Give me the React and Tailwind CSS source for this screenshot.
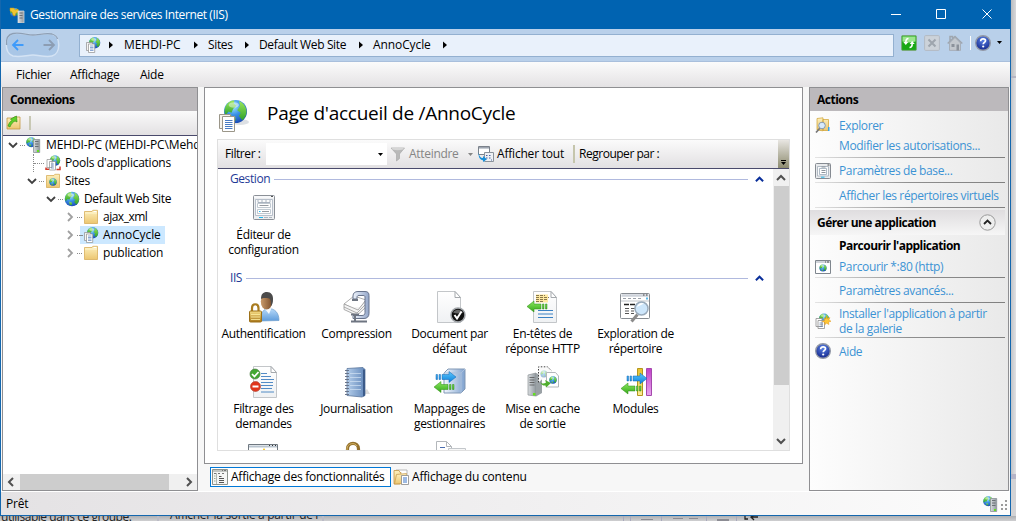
import React from "react";

/* ---------- shared gradients ---------- */
const Grad = ({ id, a, b, h }) => (
  <linearGradient id={id} x1="0" y1="0" x2={h ? 1 : 0} y2={h ? 0 : 1}>
    <stop offset="0" stopColor={a} />
    <stop offset="1" stopColor={b} />
  </linearGradient>
);
const Defs = () => (
  <svg className="absolute h-0 w-0" aria-hidden="true">
    <defs>
      <radialGradient id="sea" cx=".4" cy=".28" r=".8">
        <stop offset="0" stopColor="#a5eaff" />
        <stop offset=".45" stopColor="#3c93e6" />
        <stop offset="1" stopColor="#1440ae" />
      </radialGradient>
      <radialGradient id="helpg" cx=".5" cy=".3" r=".7">
        <stop offset="0" stopColor="#5b83e6" />
        <stop offset="1" stopColor="#14278c" />
      </radialGradient>
      <Grad id="land" a="#9be85c" b="#2fa12a" />
      <Grad id="folder" a="#fdf0bd" b="#ecc670" />
      <Grad id="blueA" a="#5cc8fb" b="#0b7fdc" />
      <Grad id="greenA" a="#8be860" b="#35a81a" />
      <Grad id="gold" a="#f7de86" b="#a8761a" />
      <Grad id="srv" a="#d9dde0" b="#8f979d" h />
      <Grad id="steel" a="#eef3fb" b="#93a6c9" h />
      <Grad id="book" a="#b3cdea" b="#6489bb" h />
      <Grad id="shirt" a="#b9dbfa" b="#5e9cdc" />
      <Grad id="skin" a="#c99b6c" b="#7c4f2c" h />
      <Grad id="purple" a="#c040c8" b="#e9a5ef" />
      <Grad id="yellow" a="#e5c12a" b="#fbec98" />
      <Grad id="cube" a="#f2f7fd" b="#7fa2cf" h />
      <Grad id="page" a="#ffffff" b="#eff1f3" />
    </defs>
  </svg>
);

/* ---------- icon parts ---------- */
const Globe = ({ x = 8, y = 8, r = 7 }) => (
  <g transform={`translate(${x} ${y}) scale(${r / 10})`}>
    <circle r="10" fill="url(#sea)" />
    <path d="M-8.8-4C-7-8-4-9.5-1-9.5L-1.5-7 1-5-2-2.5-3.5 1-6 0-8.5 3C-10 1-9.6-2-8.8-4Z" fill="url(#land)" />
    <path d="M3-9.2C7-7.5 9.5-4 9.6 0 9.6 3 8 6 6 7.6L3 4 4.5 1 1.5-1 4-5Z" fill="url(#land)" />
    <path d="M-4 3.5 0 5 0 8-3 8.5Z" fill="url(#land)" />
    <ellipse cx="-1.5" cy="-5.6" rx="4.5" ry="2.4" fill="#fff" opacity=".45" />
  </g>
);
const Fold = () => (
  <>
    <path d="M5.5.5H23L28.500 6.5V31.500H5.5Z" fill="url(#page)" stroke="#c3c6c9" />
    <path d="M23 .5V6.500H28.500Z" fill="#fff" stroke="#a5a9ad" />
  </>
);
const BlueArrow = ({ x, y }) => (
  <path transform={`translate(${x} ${y})`} d="M0 3.500h1.500v5H0ZM3 3.500h1.500v5H3ZM6 3.500h7V.5L20 6l-7 5.500V8.500H6Z" fill="url(#blueA)" stroke="#0f65b4" strokeWidth=".5" />
);
const GreenArrow = ({ x, y }) => (
  <path transform={`translate(${x} ${y})`} d="M20 3.500h-1.500v5H20ZM17 3.500h-1.500v5H17ZM14 3.500H7V.5L0 6l7 5.500V8.500h7Z" fill="url(#greenA)" stroke="#2e8d15" strokeWidth=".5" />
);

const Svg = ({ s = 16, v = 16, children, className = "" }) => (
  <svg width={s} height={s} viewBox={`0 0 ${v} ${v}`} className={`shrink-0 ${className}`}>{children}</svg>
);

/* ---------- 16px icons ---------- */
const GlobePages = ({ s = 16 }) => (
  <Svg s={s}>
    <Globe x={9.6} y={5.800} r={5.700} />
    <path d="M1.500 5.500h6v8h-6Z" fill="#f3f3f3" stroke="#8e8e8e" strokeWidth=".7" />
    <path d="M3.500 7h6.200v8.500H3.500Z" fill="#fff" stroke="#8e8e8e" strokeWidth=".7" />
    <path d="M5 9h3.500M5 10.500h3.500M5 12h3.500M5 13.500h3.500" stroke="#5a82c0" strokeWidth=".7" />
  </Svg>
);
const BigGlobePages = () => (
  <Svg s={32} v={32}>
    <ellipse cx="21" cy="22" rx="9" ry="3" fill="#c7ccd2" opacity=".6" />
    <Globe x={16.500} y={11.500} r={11.500} />
    <path d="M.5 14.500h11v14H.5Z" fill="#f6f3ec" stroke="#9b9689" />
    <path d="M3.500 16.500h12v15h-12Z" fill="#fff" stroke="#9b9689" />
    <path d="M6 20.500h7.500M6 22.500h7.500M6 24.500h7.500M6 26.500h7.500M6 28.500h7.500" stroke="#4a7cc2" />
  </Svg>
);
const Pools = () => (
  <Svg>
    <Globe x={10} y={5.500} r={5.200} />
    <path d="M2 4.500h5v8H2ZM4.500 6.500h6v8.500h-6Z" fill="#fff" stroke="#8e8e8e" strokeWidth=".7" />
    <path d="M6 9h3M6 11h3M6 13h3" stroke="#5a82c0" strokeWidth=".7" />
    <path d="M1 12.500v1.800h3M15 11.500v3h-3.500" fill="none" stroke="#d03a2c" strokeWidth="1.500" />
  </Svg>
);
const ServerGlobe = ({ s = 16 }) => (
  <Svg s={s}>
    <Globe x={5.200} y={5.200} r={5} />
    <path d="M7.500 2.500h6.200v13H7.500Z" fill="url(#srv)" stroke="#8b9398" strokeWidth=".8" />
    <path d="M9 4.500h3.500M9 7h3.500M9 9.500h3.500" stroke="#555d62" strokeWidth=".8" />
    <path d="M11 13h2v2h-2Z" fill="#61e21c" />
  </Svg>
);
const AppIcon = () => (
  <Svg>
    <Globe x={5.500} y={5.500} r={4.500} />
    <path d="M1 1h4l1 2 3-1 1 3-3 1-1 3-2-1-1-3-2-1Z" fill="#efc62f" stroke="#b98b12" strokeWidth=".5" />
    <path d="M9 4h6v12H9Z" fill="url(#srv)" stroke="#dbe1e5" strokeWidth=".7" />
    <path d="M10.500 6h3M10.500 8.500h3M10.500 11h3" stroke="#555d62" strokeWidth=".8" />
  </Svg>
);
const FolderShape = () => (
  <path d="M1.500 2.500h7.500l.8-1.200h4.700V14.500H1.500Z" fill="url(#folder)" stroke="#d8ae5c" strokeWidth=".8" />
);
const Folder = () => (
  <Svg><FolderShape /><path d="M2 4h12" stroke="#fff6d0" /><path d="M10.500 2.500h3" stroke="#fff" /></Svg>
);
const FolderGlobe = () => (<Svg><FolderShape /><Globe x={8} y={9} r={3.700} /></Svg>);
const FolderUp = () => (
  <Svg>
    <path d="M1 3h6l1-1h6v12H1Z" fill="url(#folder)" stroke="#c69a45" strokeWidth=".8" />
    <path d="M2 11C3 8 4 6.500 6 5.500L4.500 4 10.500 1 11 7 9 6C7 7 5 9 4 12Z" fill="#5fd028" stroke="#2c8b13" strokeWidth=".6" />
  </Svg>
);
const GlobeOnly = () => (<Svg><Globe x={8} y={8} r={7.300} /></Svg>);
const FolderSearch = () => (
  <Svg>
    <path d="M2 1.500 8 .8v13L2 13ZM8 2.500h5.500v11H8Z" fill="url(#folder)" stroke="#cfa12f" strokeWidth=".7" />
    <path d="M1 15.500 5 11" stroke="#777" strokeWidth="1.700" />
    <circle cx="7" cy="8.500" r="3.300" fill="#d7eafc" stroke="#8499b0" />
    <path d="M13 10v4h1.500v-4Z" fill="#36a0e8" />
  </Svg>
);
const ConfigShape = () => (
  <>
    <rect x=".5" y=".5" width="21" height="24" rx="1" fill="#eceef0" stroke="#8b9097" />
    <path d="M1 2h20" stroke="#f7f8fa" strokeWidth="2" />
    <path d="M18 1.500h2" stroke="#555" />
    <path d="M2.500 4.500h17v16h-17Z" fill="#fafbfc" stroke="#b0b9c5" strokeWidth=".9" />
    <path d="M5 5v2.500h12V5M9 5v2.500M13 5v2.500" fill="none" stroke="#a2acb9" strokeWidth=".9" />
    <path d="M4.500 8.500h13v4h-13ZM4.500 14.500h13v4h-13Z" fill="#fff" stroke="#b9c3cc" strokeWidth=".9" />
    <path d="M6.500 10.500h9M9 16.500h7" stroke="#8a9096" strokeWidth=".9" />
    <path d="M6 16.500h1.500M6 22.500h4" stroke="#22b8ee" />
    <path d="M11 22.500h4M16 22.500h3" stroke="#aeb6bf" />
  </>
);
const ConfigSmall = () => (
  <Svg>
    <rect x=".5" y=".5" width="15" height="15" rx="1" fill="#e8eaec" stroke="#868b92" />
    <path d="M12.500 2h2" stroke="#444" />
    <path d="M2.500 3.500h11v9.500h-11Z" fill="#fafbfc" stroke="#a2acb9" strokeWidth=".8" />
    <path d="M4.500 5.500h7v6h-7Z" fill="#fff" stroke="#9ba9b7" strokeWidth=".8" />
    <path d="M6.500 7.500h4M6.500 9.500h4M6.500 4h4" stroke="#808891" strokeWidth=".9" />
    <path d="M6 14.200h3.500" stroke="#22b8ee" />
  </Svg>
);
const BrowserGlobe = () => (
  <Svg>
    <path d="M.5 1.500h15v13H.5Z" fill="#fff" stroke="#7f868e" />
    <path d="M1 3h14" stroke="#cbd0d6" strokeWidth="1.800" /><path d="M10 3h1M12 3h2" stroke="#555" />
    <Globe x={8} y={9} r={3.600} />
  </Svg>
);
const Gallery = () => (
  <Svg>
    <Globe x={9} y={5.500} r={5} />
    <path d="M1 5.500h6v8H1ZM3 7.500h6.500v8H3Z" fill="#fff" stroke="#8e8e8e" strokeWidth=".8" />
    <path d="M4.500 10h3.500M4.500 11.800h3.500M4.500 13.500h3.500" stroke="#6d86aa" strokeWidth=".8" />
    <path d="m11.500 3 .9 2.500 2.500-.9-1.100 2.400 2.200 1.200-2.500.8.400 2.500-2.300-1.300-1.900 1.600.1-2.600L7.300 8.500l2.300-1L9 5l2 .9Z" fill="#ffc735" stroke="#e39416" strokeWidth=".5" />
  </Svg>
);
const Help = () => (
  <Svg>
    <circle cx="8" cy="8" r="7.300" fill="url(#helpg)" stroke="#9298a6" strokeWidth="1.400" />
    <path d="M5.700 6.200C5.700 4.600 6.700 3.800 8.100 3.800c1.500 0 2.400.8 2.400 2 0 1.500-2.300 1.700-2.300 3.400" fill="none" stroke="#fff" strokeWidth="1.700" />
    <circle cx="8.200" cy="11.500" r="1.100" fill="#fff" />
  </Svg>
);
const Refresh = () => (
  <Svg>
    <rect x=".6" y=".6" width="14.800" height="14.800" rx="1" fill="#19a815" stroke="#7ba878" />
    <path d="M1.500 1.500h13v5q-6.500 2-13 0Z" fill="#9be58e" />
    <path d="M7.500 3.500C5.500 3.500 4.800 5 4.800 7.500M8.500 12.500c2 0 2.700-1.500 2.700-4" fill="none" stroke="#fff" strokeWidth="1.600" />
    <path d="M2.300 7h5L4.800 10ZM8.700 9h5L11.200 6Z" fill="#fff" />
  </Svg>
);
const Stop = () => (
  <Svg>
    <rect x=".6" y=".6" width="14.800" height="14.800" rx="1" fill="#ccd2d9" stroke="#b3bac3" />
    <path d="m4.500 4.500 7 7m0-7-7 7" stroke="#9ea5ae" strokeWidth="2.100" />
  </Svg>
);
const Home = () => (
  <Svg>
    <path d="M2.500 8v7.400h11V8L8 2.500Z" fill="#c3c8ce" stroke="#a1a7b0" strokeWidth=".8" />
    <path d="M.7 8.500 8 1.500l7.300 7M3 6V1.500h2.500V4" fill="none" stroke="#9fa6af" strokeWidth="1.500" />
    <path d="M4.500 9h3v3h-3ZM9.500 9.500h2.500v6H9.500Z" fill="#8c929b" />
  </Svg>
);
const Funnel = () => (
  <Svg>
    <path d="M1 2h13.500L9.500 8v4.500L6.500 15V8Z" fill="#b9b9b9" stroke="#a2a2a2" strokeWidth=".6" />
    <ellipse cx="7.700" cy="2.800" rx="6.200" ry="1.400" fill="#d6d6d6" />
  </Svg>
);
const ShowAll = () => (
  <Svg>
    <path d="M.5.500h11v8H.5Z" fill="#fff" stroke="#7b828b" /><path d="M1 1.800h10" stroke="#9aa2ad" strokeWidth="1.500" />
    <path d="M6.500 6.500h9v9h-9Z" fill="#eef0f4" stroke="#8b929b" />
    <path d="M8 9.500h1.500M11 9.500h1.500M8 12h1.500M11 12h1.500M13 14h1" stroke="#47629f" strokeWidth="1.200" />
    <path d="M.8 6.500C.8 10 2.500 12 5 12v-2l4 3.300-4 2.700v-1.800C2 14 0 11 .8 6.500Z" fill="#1a8fd8" />
  </Svg>
);
const FeatureView = () => (
  <Svg>
    <path d="M.5.5h15v15H.5Z" fill="#f5f6f5" stroke="#8d938d" />
    <path d="M1 2h14" stroke="#c3c6c3" strokeWidth="2" /><path d="M10 1.500h1M12 1.500h2M2 4.500h2M6 4.500h2M10 4.500h2" stroke="#777" />
    <path d="M2 7h1.500M2 9.500h1.500M2 12h1.500" stroke="#9daf98" /><path d="M4.500 4v11" stroke="#b3b8b3" />
    <path d="M7 7.500h2.500M7 9.500h5M7 11.500h5M7 13.500h5" stroke="#555" />
  </Svg>
);
const ContentView = () => (
  <Svg>
    <path d="M3 1h11v9H3Z" fill="#fff" stroke="#a8a8a8" strokeWidth=".8" />
    <path d="M1 1.500h5l1 2h1l-1 11.500H1Z" fill="url(#folder)" stroke="#c49747" strokeWidth=".8" />
    <path d="M3.500 5.500 13.500 4.500 12 14.500 1.500 15Z" fill="url(#folder)" stroke="#c49747" strokeWidth=".7" />
    <path d="M8.500 6.500h7v9h-7Z" fill="#fff" stroke="#888" strokeWidth=".8" />
    <path d="M10 9h4M10 11h4M10 13h4" stroke="#3a74c6" />
  </Svg>
);

/* ---------- 32px feature icons ---------- */
const L = ({ children }) => <Svg s={32} v={32}>{children}</Svg>;
const Icons = {
  config: <L><g transform="translate(5 3)"><ConfigShape /></g></L>,
  auth: (
    <L>
      <path d="M12.500 30c0-8 3-12.500 8-12.500 6 0 10.500 4 10.500 12Z" fill="url(#shirt)" stroke="#6b9ccc" strokeWidth=".7" />
      <path d="m17 18 4 5 2.500-6Z" fill="#f7fafd" />
      <ellipse cx="18.500" cy="10.500" rx="5.700" ry="8" fill="url(#skin)" />
      <path d="M13 8C13 3 15 1 19 1s6.500 3 6 8c0 3-1 5-2 6 0-5 0-8-4-8-2 0-4-.5-6 1Z" fill="#4c4b4b" />
      <path d="M4 21v-4c0-5 6.500-5 6.500 0v4" fill="none" stroke="#a97c20" strokeWidth="2.200" />
      <rect x="1.500" y="20" width="12" height="11" rx="1" fill="url(#gold)" stroke="#9d7119" />
      <path d="M3 23.500h9M3 26h9M3 28.500h9" stroke="#fff0a4" strokeWidth=".8" />
    </L>
  ),
  compression: (
    <L>
      <path d="m3 13 10-8 12 4-8 11Z" fill="#fff" stroke="#999" strokeWidth=".8" />
      <path d="m3 13v3l13 6 9-9V9l-8 10ZM3 16v2.500l13 6L25 16" fill="#f4f4f4" stroke="#999" strokeWidth=".8" />
      <path d="M12 8V5c0-3 2-4.500 5-4.500h7c3 0 4 1.500 4 4v18c0 3-2 5-5 5H12v-3h9c2 0 3-1 3-3V6c0-1-.5-1.500-2-1.500h-4c-2 0-2 1-2 3.500Z" fill="url(#steel)" stroke="#67738b" strokeWidth="1" />
      <path d="M11 9h6M14 24v6M10 30.500h16M10 23.500h8" stroke="#6e7581" strokeWidth="2" />
    </L>
  ),
  document: (
    <L><g transform="translate(-2 0)"><Fold /></g>
      <circle cx="24" cy="24" r="7" fill="#111" stroke="#a0a4a8" strokeWidth="1.500" />
      <path d="M19 21.500a6 6 0 0 1 10 0q-5 2-10 0Z" fill="#666" />
      <path d="m20.500 24 2.500 3.500 4.500-7" fill="none" stroke="#fff" strokeWidth="2" />
    </L>
  ),
  headers: (
    <L><g transform="translate(1 0)"><Fold /></g>
      <path d="M9 3.500h12v8H9Z" fill="#ffe9a0" />
      <path d="M9 4.500h9M9 6.500h13M9 8.500h12M9 10.500h8" stroke="#6b5a34" strokeWidth=".8" strokeDasharray="3 1" />
      <path d="M11 19.500h15M11 23h15M11 26.500h15" stroke="#3b82c4" strokeWidth="1.200" />
      <GreenArrow x={0} y={9.500} />
    </L>
  ),
  browse: (
    <L>
      <rect x=".5" y="2.500" width="29" height="25" rx="1" fill="#fff" stroke="#878c92" />
      <path d="M1.500 4.500h27" stroke="#cdd2da" strokeWidth="2.500" /><path d="M23 4h1.500M26 4h1.500" stroke="#444" />
      <path d="M3 7.500h20" stroke="#9ba1aa" strokeDasharray="3 2" /><path d="M1 10h28" stroke="#c0c5cb" />
      <path d="M4 13.500h11" stroke="#222" strokeWidth="1.400" strokeDasharray="5 1" />
      <path d="M5 17.500h4M11 17.500h4M5 20h4M11 20h3M5 22.500h4M11 22.500h3" stroke="#555" />
      <path d="m11.500 30.500 6-7" stroke="#8b8b8b" strokeWidth="3" />
      <circle cx="21.500" cy="17.500" r="6.500" fill="#cde6fb" stroke="#9ab" strokeWidth="1.500" />
      <path d="M17 16a5 5 0 0 1 7-3.500Z" fill="#fff" />
      <path d="M26 6.500h2v2h-2Z" fill="#58b7e8" />
    </L>
  ),
  filter: (
    <L><Fold />
      <path d="M13 7.500h6M13 10.500h10M13 13.500h13M13 16.500h12M13 19.500h12M13 22.500h11M13 26h13" stroke="#3f7fc0" strokeWidth=".9" />
      <circle cx="7" cy="8" r="5" fill="#43a832" stroke="#4c7b45" strokeWidth=".7" /><path d="m4 8 2.500 2.500L10.500 6" fill="none" stroke="#fff" strokeWidth="1.700" />
      <circle cx="7.500" cy="20.500" r="5" fill="#e1351b" stroke="#b44836" strokeWidth=".7" /><path d="M4.500 20.500h6" stroke="#fff" strokeWidth="2" />
    </L>
  ),
  journal: (
    <L>
      <path d="m20 28 9 0-3-5Z" fill="#ddd" />
      <path d="M6 2.500 22 1.500l2 2v26l-3 1.500L6 29.500Z" fill="url(#book)" stroke="#5b769c" strokeWidth=".8" />
      <path d="m22 3.500 2 0v26l-2 1Z" fill="#3c5b8a" />
      <path d="M9 7.500h11M9 11.500h11M9 15.500h11M9 19.500h11M9 23.500h11" stroke="#d3e2f3" strokeWidth=".7" />
      <path d="M4 4.500h4M4 7.500h4M4 10.500h4M4 13.500h4M4 16.500h4M4 19.500h4M4 22.500h4M4 25.500h4M4 28.500h4" stroke="#69748a" />
    </L>
  ),
  handlers: (
    <L>
      <path d="m10 7 4-4h17v20l-4 4H10Z" fill="url(#cube)" stroke="#8198b5" />
      <path d="M10 7h17v20M27 7l4-4" fill="none" stroke="#a9bfdb" />
      <BlueArrow x={2} y={5} /><GreenArrow x={0} y={15} />
    </L>
  ),
  cache: (
    <L>
      <path d="m1 9 8-2v23l-8-1Z" fill="url(#srv)" stroke="#8c9295" strokeWidth=".7" />
      <path d="m9 7 6 3v17l-6 3.500Z" fill="#9aa1a5" />
      <path d="M2.500 11.500h5M2.500 14h5M2.500 16.500h5M2.500 19h5" stroke="#555" strokeWidth=".8" /><path d="M6 27h2.500v2.500H6Z" fill="#62e01e" />
      <path d="M11.500 16.500V.8h9l4 4" fill="#fafafa" stroke="#444" strokeDasharray="1.500 1.500" />
      <g opacity=".45"><Globe x={17} y={8} r={3.500} /></g>
      <path d="M19.500 6.500h9l3 3.500v11h-12Z" fill="#fff" stroke="#b3b7bb" /><Globe x={26} y={14} r={3.700} />
      <path d="M13 16c2 2 4 2 6 .5L18 14l6 3-5 4.500-.5-2c-2 .5-4-.5-5.500-3.500Z" fill="#4fae2e" />
    </L>
  ),
  modules: (
    <L>
      <path d="M17.500 2.500h5v27h-5Z" fill="url(#yellow)" stroke="#b4961c" />
      <path d="M26.500 2.500h5v27h-5Z" fill="url(#purple)" stroke="#a449ac" />
      <BlueArrow x={7} y={6.500} /><GreenArrow x={1} y={16.500} />
    </L>
  ),
  errors: (
    <L><path d="M.5 3.500h29V29H.5Z" fill="#fff" stroke="#6f7880" /><path d="M1 5.500h28" stroke="#b9c4cf" strokeWidth="2" /><path d="M21 4.500h1M24 4.500h1M27 4.500h1" stroke="#333" /><path d="m16 7 6 10H10Z" fill="#f2c321" /></L>
  ),
  ssl: (
    <L><path d="M6.500 14V8c0-7.500 11-7.500 11 0v6" fill="none" stroke="#93702c" strokeWidth="3.200" /><path d="M6 14V8c0-6 8-7 10-3" fill="none" stroke="#d5b565" strokeWidth="1" /></L>
  ),
  mime: (
    <L><path d="M2.500.5h10l5 5V28h-15Z" fill="#fff" stroke="#b3b7bb" /><path d="M12.500.5v5h5" fill="none" stroke="#b3b7bb" /><path d="M6 6.500h5" stroke="#4a6db0" /><path d="M14.500 7.500h17V30h-17Z" fill="#f7f7f7" stroke="#c3c7cb" /></L>
  ),
};

/* ---------- chevrons and arrows ---------- */
const Chevron = ({ dir = "down", color = "#404040", w = 1.800, s = 10 }) => {
  const d = { down: "m1 3 4 4 4-4", up: "m1 7 4-4 4 4", left: "m7 1-4 4 4 4", right: "m3 1 4 4-4 4" }[dir];
  return <svg width={s} height={s} viewBox="0 0 10 10" className="shrink-0"><path d={d} fill="none" stroke={color} strokeWidth={w} /></svg>;
};
const Triangle = ({ color = "#000" }) => (
  <svg width="5" height="3" viewBox="0 0 5 3" className="shrink-0"><path d="M0 0h5L2.500 3Z" fill={color} /></svg>
);
const CrumbArrow = () => (
  <svg width="5" height="8" viewBox="0 0 5 8" className="shrink-0"><path d="m0 .5 4 3.500-4 3.500Z" fill="#000" /></svg>
);

/* ---------- title bar ---------- */
const TitleBar = () => (
  <div className="flex h-[29px] shrink-0 items-center bg-[#0063b1] pl-[8px] text-white">
    <AppIcon />
    <span className="ml-[5px] flex-1 tracking-[-0.41px]">Gestionnaire des services Internet (IIS)</span>
    <svg width="104" height="12" viewBox="0 0 104 12" className="mb-[2px] mr-[15px]" fill="none" stroke="#fff">
      <path d="M0 6.500h10M45.500 1.500h9v9h-9ZM91.500 1.500l9 9m0-9-9 9" />
    </svg>
  </div>
);

const Crumb = ({ children, className }) => <span className={className}>{children}</span>;

const AddressBar = () => (
  <div className="flex h-[33px] shrink-0 items-center border-b border-[#a9bfdc] bg-[#b9d0ea] pl-[4px]">
    <svg width="56" height="28" viewBox="0 0 56 28" className="shrink-0">
      <path d="M8 2.500C16 1 22 4 28 4s12-2.500 19-1c9 2 9 20 0 22-7 1.500-13-1-19-1s-12 2.500-20 1C-1 22-1 5 8 2.500Z" fill="#a9c6e6" stroke="#d4e3f4" strokeWidth="1.500" />
      <path d="M1.500 14C1 7 3 3.500 8 2.500c7-1.500 14 1.500 20 1.500s12-2.500 19-1c3 1 5 3 5.500 5" fill="none" stroke="#8d9fb5" strokeWidth="1.300" />
      <path d="M18.500 14H8m5-5-5 5 5 5" fill="none" stroke="#3f9bfa" strokeWidth="1.800" />
      <path d="M38.500 14H49m-5-5 5 5-5 5" fill="none" stroke="#8c9db3" strokeWidth="1.800" />
    </svg>
    <div className="ml-[18px] flex h-[23px] w-[815px] items-center border border-[#93b0d0] bg-[#e9f1fb] pl-[5px]">
      <GlobePages />
      <span className="ml-[8px]"><CrumbArrow /></span>
      <Crumb className="ml-[10px] w-[70px] whitespace-nowrap tracking-[-0.05px]">MEHDI-PC</Crumb>
      <CrumbArrow />
      <Crumb className="ml-[9px] w-[37px] tracking-[-0.35px]">Sites</Crumb>
      <CrumbArrow />
      <Crumb className="ml-[9px] w-[100px] whitespace-nowrap tracking-[-0.36px]">Default Web Site</Crumb>
      <CrumbArrow />
      <Crumb className="ml-[9px] w-[70px] tracking-[-0.1px]">AnnoCycle</Crumb>
      <CrumbArrow />
    </div>
    <div className="mb-[5px] ml-[7px] flex items-center">
      <Refresh /><span className="ml-[7px] h-4"><Stop /></span><span className="ml-[7px] h-4"><Home /></span>
      <span className="ml-[7px] h-[14px] w-px bg-white" /><span className="ml-[4px] h-4"><Help /></span>
      <span className="ml-[6px] flex"><Triangle /></span>
    </div>
  </div>
);

const MenuBar = () => (
  <div className="flex h-[25px] shrink-0 items-center border-b border-[#e4e3e4] bg-gradient-to-b from-[#fbfbfb] to-[#e5e3e5] pl-[15px] pt-px tracking-[-0.25px]">
    <span className="w-[54px]">Fichier</span>
    <span className="w-[70px]">Affichage</span>
    <span>Aide</span>
  </div>
);

/* ---------- connections tree ---------- */
const Dots = ({ className }) => <span className={`shrink-0 border-t border-dotted border-[#8a8a8a] ${className}`} />;

const TreeLabel = ({ icon, label, selected, track }) => (
  <span className={`flex h-full items-center ${selected ? "bg-[#cce8ff]" : ""}`}>
    {selected && <Dots className="w-[2px]" />}
    <span className="ml-[1px]">{icon}</span>
    <span className={`ml-[4px] pr-[4px] ${track}`}>{label}</span>
  </span>
);
const TreeRow = ({ pad, open, selected, track = "tracking-[-0.3px]", ...rest }) => (
  <div className={`flex h-[18px] items-center whitespace-nowrap ${pad}`}>
    <span className="flex w-[10px] shrink-0 justify-center">
      {open ? <Chevron color="#404040" /> : <Chevron dir="right" color="#a0a0a0" />}
    </span>
    <Dots className={selected ? "ml-[2px] w-[3px]" : "ml-[2px] w-[5px]"} />
    <TreeLabel selected={selected} track={track} {...rest} />
  </div>
);

const Connections = () => (
  <section className="flex h-[404px] w-[196px] shrink-0 flex-col overflow-hidden border border-[#8f8f92] bg-white">
    <h2 className="flex h-[23px] shrink-0 items-center bg-[#bcb9bc] pl-[7px] font-bold tracking-[-0.55px]">Connexions</h2>
    <div className="flex h-[25px] shrink-0 items-center border-b border-[#4a4a6c] bg-gradient-to-b from-[#fafafa] to-[#e3e1e3] pl-[3px]">
      <FolderUp /><span className="ml-[7px] h-[14px] w-[2px] bg-[#c8c8b4]" />
    </div>
    <div className="flex-1 overflow-hidden">
      <TreeRow pad="pl-[5px]" open icon={<ServerGlobe />} label="MEHDI-PC (MEHDI-PC\Mehdi)" track="tracking-[-0.12px]" />
      <div className="flex h-[18px] items-center whitespace-nowrap pl-[30px]">
        <span className="h-full shrink-0 border-l border-dotted border-[#8a8a8a]" />
        <Dots className="w-[10px]" />
        <TreeLabel icon={<Pools />} label="Pools d'applications" track="tracking-[-0.25px]" />
      </div>
      <TreeRow pad="pl-[24px]" open icon={<FolderGlobe />} label="Sites" />
      <TreeRow pad="pl-[43px]" open icon={<GlobeOnly />} label="Default Web Site" track="tracking-[-0.36px]" />
      <TreeRow pad="pl-[62px]" icon={<Folder />} label="ajax_xml" track="tracking-[-0.5px]" />
      <TreeRow pad="pl-[62px]" icon={<GlobePages />} label="AnnoCycle" selected track="tracking-[-0.1px]" />
      <TreeRow pad="pl-[62px]" icon={<Folder />} label="publication" track="tracking-[-0.2px]" />
    </div>
    <div className="flex h-[16px] shrink-0 items-center justify-between bg-[#f0f0f0] pl-[3px] pr-[3px]">
      <Chevron dir="left" color="#505050" w={2} />
      <span className="ml-[4px] h-full w-[149px] bg-[#cdcdcd]" />
      <span className="flex-1" />
      <Chevron dir="right" color="#505050" w={2} />
    </div>
  </section>
);

/* ---------- feature list ---------- */
const GroupHeader = ({ label }) => (
  <div className="flex h-[20px] items-center pl-[12px] text-[#1e3a96]">
    <span className="tracking-[-0.42px]">{label}</span>
    <span className="ml-[4px] mr-[7px] h-px flex-1 bg-[#b0b9de]" />
    <span className="mr-[9px] flex"><Chevron dir="up" color="#0a2f9a" w={2.200} s={9} /></span>
  </div>
);
const Tile = ({ icon, lines = [] }) => (
  <div className="flex h-[75px] w-[93px] flex-col items-center whitespace-nowrap text-center leading-[15px]">
    {Icons[icon]}
    <div className="mt-[3px] tracking-[-0.32px]">{lines.map((l) => <div key={l}>{l}</div>)}</div>
  </div>
);

const FeatureToolbar = () => (
  <div className="flex h-[29px] shrink-0 items-center border-b border-[#4a4a6c] bg-gradient-to-b from-[#fbfbfb] to-[#e2e0e2]">
    <span className="ml-[7px] w-[41px] whitespace-nowrap tracking-[-0.42px]">Filtrer :</span>
    <span className="flex h-[22px] w-[121px] items-center justify-end bg-white pr-[4px]"><Triangle /></span>
    <span className="ml-[3px] h-4"><Funnel /></span>
    <span className="ml-[3px] w-[59px] text-[#858585] tracking-[-0.3px]">Atteindre</span>
    <Triangle color="#858585" />
    <span className="ml-[5px] h-4"><ShowAll /></span>
    <span className="ml-[3px] w-[76px] whitespace-nowrap tracking-[-0.2px]">Afficher tout</span>
    <span className="h-[18px] w-[2px] bg-[#c5c5ac]" />
    <span className="ml-[4px] flex-1 tracking-[-0.48px]">Regrouper par :</span>
    <span className="flex h-full w-[11px] flex-col items-center justify-end gap-[1px] bg-gradient-to-b from-[#e8e6e2] to-[#8e8c70] pb-[3px]">
      <span className="h-px w-[5px] bg-black" /><Triangle />
    </span>
  </div>
);

const Features = () => (
  <section className="flex h-[377px] w-[599px] flex-col border border-[#8f8f92] bg-white pl-[12px]">
    <header className="flex h-[51px] shrink-0 items-center pl-[2px]">
      <span className="mt-[4px]"><BigGlobePages /></span>
      <h1 className="mb-[1px] ml-[16px] text-[19px] tracking-[-0.28px]">Page d'accueil de /AnnoCycle</h1>
    </header>
    <div className="flex h-[312px] w-[573px] flex-col border border-[#dfdfdf] bg-white">
      <FeatureToolbar />
      <div className="flex min-h-0 flex-1">
        <div className="min-w-0 flex-1 overflow-hidden">
          <GroupHeader label="Gestion" />
          <div className="-ml-px flex h-[79px] pt-[3px]">
            <Tile icon="config" lines={["Éditeur de", "configuration"]} />
          </div>
          <GroupHeader label="IIS" />
          <div className="-ml-px grid grid-cols-[repeat(5,93px)] pt-[3px]">
            <Tile icon="auth" lines={["Authentification"]} />
            <Tile icon="compression" lines={["Compression"]} />
            <Tile icon="document" lines={["Document par", "défaut"]} />
            <Tile icon="headers" lines={["En-têtes de", "réponse HTTP"]} />
            <Tile icon="browse" lines={["Exploration de", "répertoire"]} />
            <Tile icon="filter" lines={["Filtrage des", "demandes"]} />
            <Tile icon="journal" lines={["Journalisation"]} />
            <Tile icon="handlers" lines={["Mappages de", "gestionnaires"]} />
            <Tile icon="cache" lines={["Mise en cache", "de sortie"]} />
            <Tile icon="modules" lines={["Modules"]} />
            <Tile icon="errors" />
            <Tile icon="ssl" />
            <Tile icon="mime" />
          </div>
        </div>
        <div className="flex w-[16px] shrink-0 flex-col items-center bg-[#f0f0f0] pb-[4px] pt-[4px]">
          <Chevron dir="up" color="#505050" w={2} />
          <span className="mt-[3px] h-[199px] w-[15px] bg-[#cdcdcd]" />
          <span className="flex-1" />
          <Chevron color="#505050" w={2} />
        </div>
      </div>
    </div>
  </section>
);

const ViewTabs = () => (
  <div className="mt-[3px] flex h-[20px] items-center pl-[6px]">
    <span className="flex h-[20px] w-[181px] items-center whitespace-nowrap border border-[#0078d7] bg-white pl-[1px]">
      <FeatureView /><span className="ml-[3px] tracking-[-0.25px]">Affichage des fonctionnalités</span>
    </span>
    <span className="ml-[2px] flex items-center"><ContentView /><span className="ml-[3px] tracking-[-0.2px]">Affichage du contenu</span></span>
  </div>
);

/* ---------- actions ---------- */
const Rule = () => <div className="mr-[2px] h-px shrink-0 bg-gradient-to-r from-[#e4e4e4] via-[#8e8e8e] to-[#808080]" />;
const Action = ({ icon, h, children }) => (
  <div className={`flex shrink-0 items-center ${h}`}>
    <span className="flex w-[24px] shrink-0">{icon}</span>
    <span className="whitespace-nowrap leading-[15px] tracking-[-0.37px] text-[#3c93d4]">{children}</span>
  </div>
);
const Actions = () => (
  <section className="flex h-[404px] w-[200px] shrink-0 flex-col border border-[#8f8f92] bg-gradient-to-r from-[#fdfdfd] to-[#e9e9e9]">
    <h2 className="flex h-[23px] shrink-0 items-center bg-[#bcb9bc] pl-[7px] font-bold tracking-[-0.5px]">Actions</h2>
    <div className="flex flex-col pl-[5px] pr-[1px] pt-[4px]">
      <Action h="h-[20px]" icon={<FolderSearch />}>Explorer</Action>
      <Action h="h-[22px] pb-px">Modifier les autorisations...</Action>
      <Rule />
      <Action h="h-[24px] pt-px" icon={<ConfigSmall />}>Paramètres de base...</Action>
      <Rule />
      <Action h="h-[24px] pt-px">Afficher les répertoires virtuels</Action>
      <Rule />
    </div>
    <h3 className="mr-[3px] mt-[2px] flex h-[25px] shrink-0 items-center justify-between bg-gradient-to-b from-[#dfdddf] to-[#f6f6f6] pl-[7px] pr-[9px] font-bold tracking-[-0.54px]">
      Gérer une application
      <svg width="17" height="17" viewBox="0 0 17 17"><circle cx="8.500" cy="8.500" r="7.700" fill="#eee" stroke="#999" /><path d="m5 10 3.500-3.500L12 10" fill="none" stroke="#222" strokeWidth="1.800" /></svg>
    </h3>
    <div className="flex flex-col pl-[5px] pr-[1px]">
      <div className="flex h-[22px] items-center pl-[24px] font-bold tracking-[-0.54px]">Parcourir l'application</div>
      <Action h="h-[20px] pb-px" icon={<BrowserGlobe />}>Parcourir *:80 (http)</Action>
      <Rule />
      <Action h="h-[24px] pt-px">Paramètres avancés...</Action>
      <Rule />
      <Action h="h-[34px] pt-[2px]" icon={<Gallery />}>Installer l'application à partir<br />de la galerie</Action>
      <Rule />
      <Action h="h-[26px]" icon={<Help />}>Aide</Action>
    </div>
  </section>
);

const StatusBar = () => (
  <div className="flex h-[24px] shrink-0 items-center border-t border-white bg-gradient-to-r from-[#e4e2e4] to-[#fcfcfc] pl-[5px] pr-[2px]">
    <span className="flex-1 tracking-[-0.2px]">Prêt</span>
    <ServerGlobe />
    <svg width="9" height="11" viewBox="0 0 9 11" className="mt-[4px]"><path d="M6 0h2v2H6ZM6 4h2v2H6ZM2 4h2v2H2ZM6 8h2v2H6ZM2 8h2v2H2ZM-2 8h2v2h-2Z" fill="#9a9a9a" /></svg>
  </div>
);

/* ---------- page ---------- */
export default function App() {
  return (
    <div className="flex h-[521px] w-[1016px] flex-col overflow-hidden bg-[#d0d0d2] font-['Open_Sans','Noto_Sans',sans-serif] text-[12px] leading-[16px] text-black">
      <Defs />
      <div className="flex h-[516px] shrink-0">
        <div className="flex w-[1011px] shrink-0 flex-col border-b border-l border-r border-[#1467ae] bg-[#f7f7f7]">
          <TitleBar />
          <AddressBar />
          <MenuBar />
          <main className="flex h-[404px] shrink-0 pl-[1px]">
            <Connections />
            <div className="ml-[6px] w-[599px] shrink-0">
              <Features />
              <ViewTabs />
            </div>
            <span className="w-[6px] shrink-0" />
            <Actions />
          </main>
          <StatusBar />
        </div>
        <div className="flex flex-1 flex-col">
          <span className="h-[76px] bg-gradient-to-r from-[#b9bcc0] to-[#d8d8da]" />
          <span className="h-[2px] bg-[#b6b5c2]" />
          <span className="flex-1 bg-gradient-to-r from-[#c2c4c8] to-[#e2e2e4]" />
          <span className="h-[5px] bg-[#b6b5c8]" />
          <span className="h-[37px] bg-[#d3d3d5]" />
        </div>
      </div>
      <div className="flex h-[5px] items-end overflow-hidden bg-gradient-to-b from-[#aeb0b3] to-[#cfcfd1] leading-[12px] text-[#222]">
        <span className="-mb-[2px] w-[157px] shrink-0 whitespace-nowrap pl-[1px] tracking-[-0.46px]">utilisable dans ce groupe.</span>
        <span className="h-full w-[2px] bg-[#bbbbc6]" />
        <span className="ml-[11px] w-[152px] shrink-0 whitespace-nowrap tracking-[-0.33px]">Afficher la sortie à partir de l'</span>
        <span className="h-full w-[2px] bg-[#bbbbc6]" />
        <span className="ml-[299px] h-full w-px bg-[#a9a9bd]" />
        <span className="ml-[6px] h-full w-px bg-[#a9a9bd]" />
        <span className="mb-[1px] ml-[10px] h-px w-[12px] bg-[#8c8c94]" />
        <span className="ml-[8px] h-full w-px bg-[#a9a9bd]" />
        <span className="mb-[2px] ml-[11px] h-px w-[10px] bg-[#8c8c94]" />
        <span className="mb-[2px] ml-[6px] h-px w-[9px] bg-[#8c8c94]" />
        <span className="ml-[8px] h-full w-px bg-[#a9a9bd]" />
        <span className="ml-[10px] h-[2px] w-[12px] bg-[#8c8c94]" />
        <span className="ml-[7px] h-full w-px bg-[#a9a9bd]" />
        <svg width="16" height="5" viewBox="0 0 16 5" className="ml-[7px]"><path d="M1 0v3h3M14 1H8M10-1 7 1l3 3" fill="none" stroke="#222" strokeWidth="1.300" /></svg>
      </div>
    </div>
  );
}
